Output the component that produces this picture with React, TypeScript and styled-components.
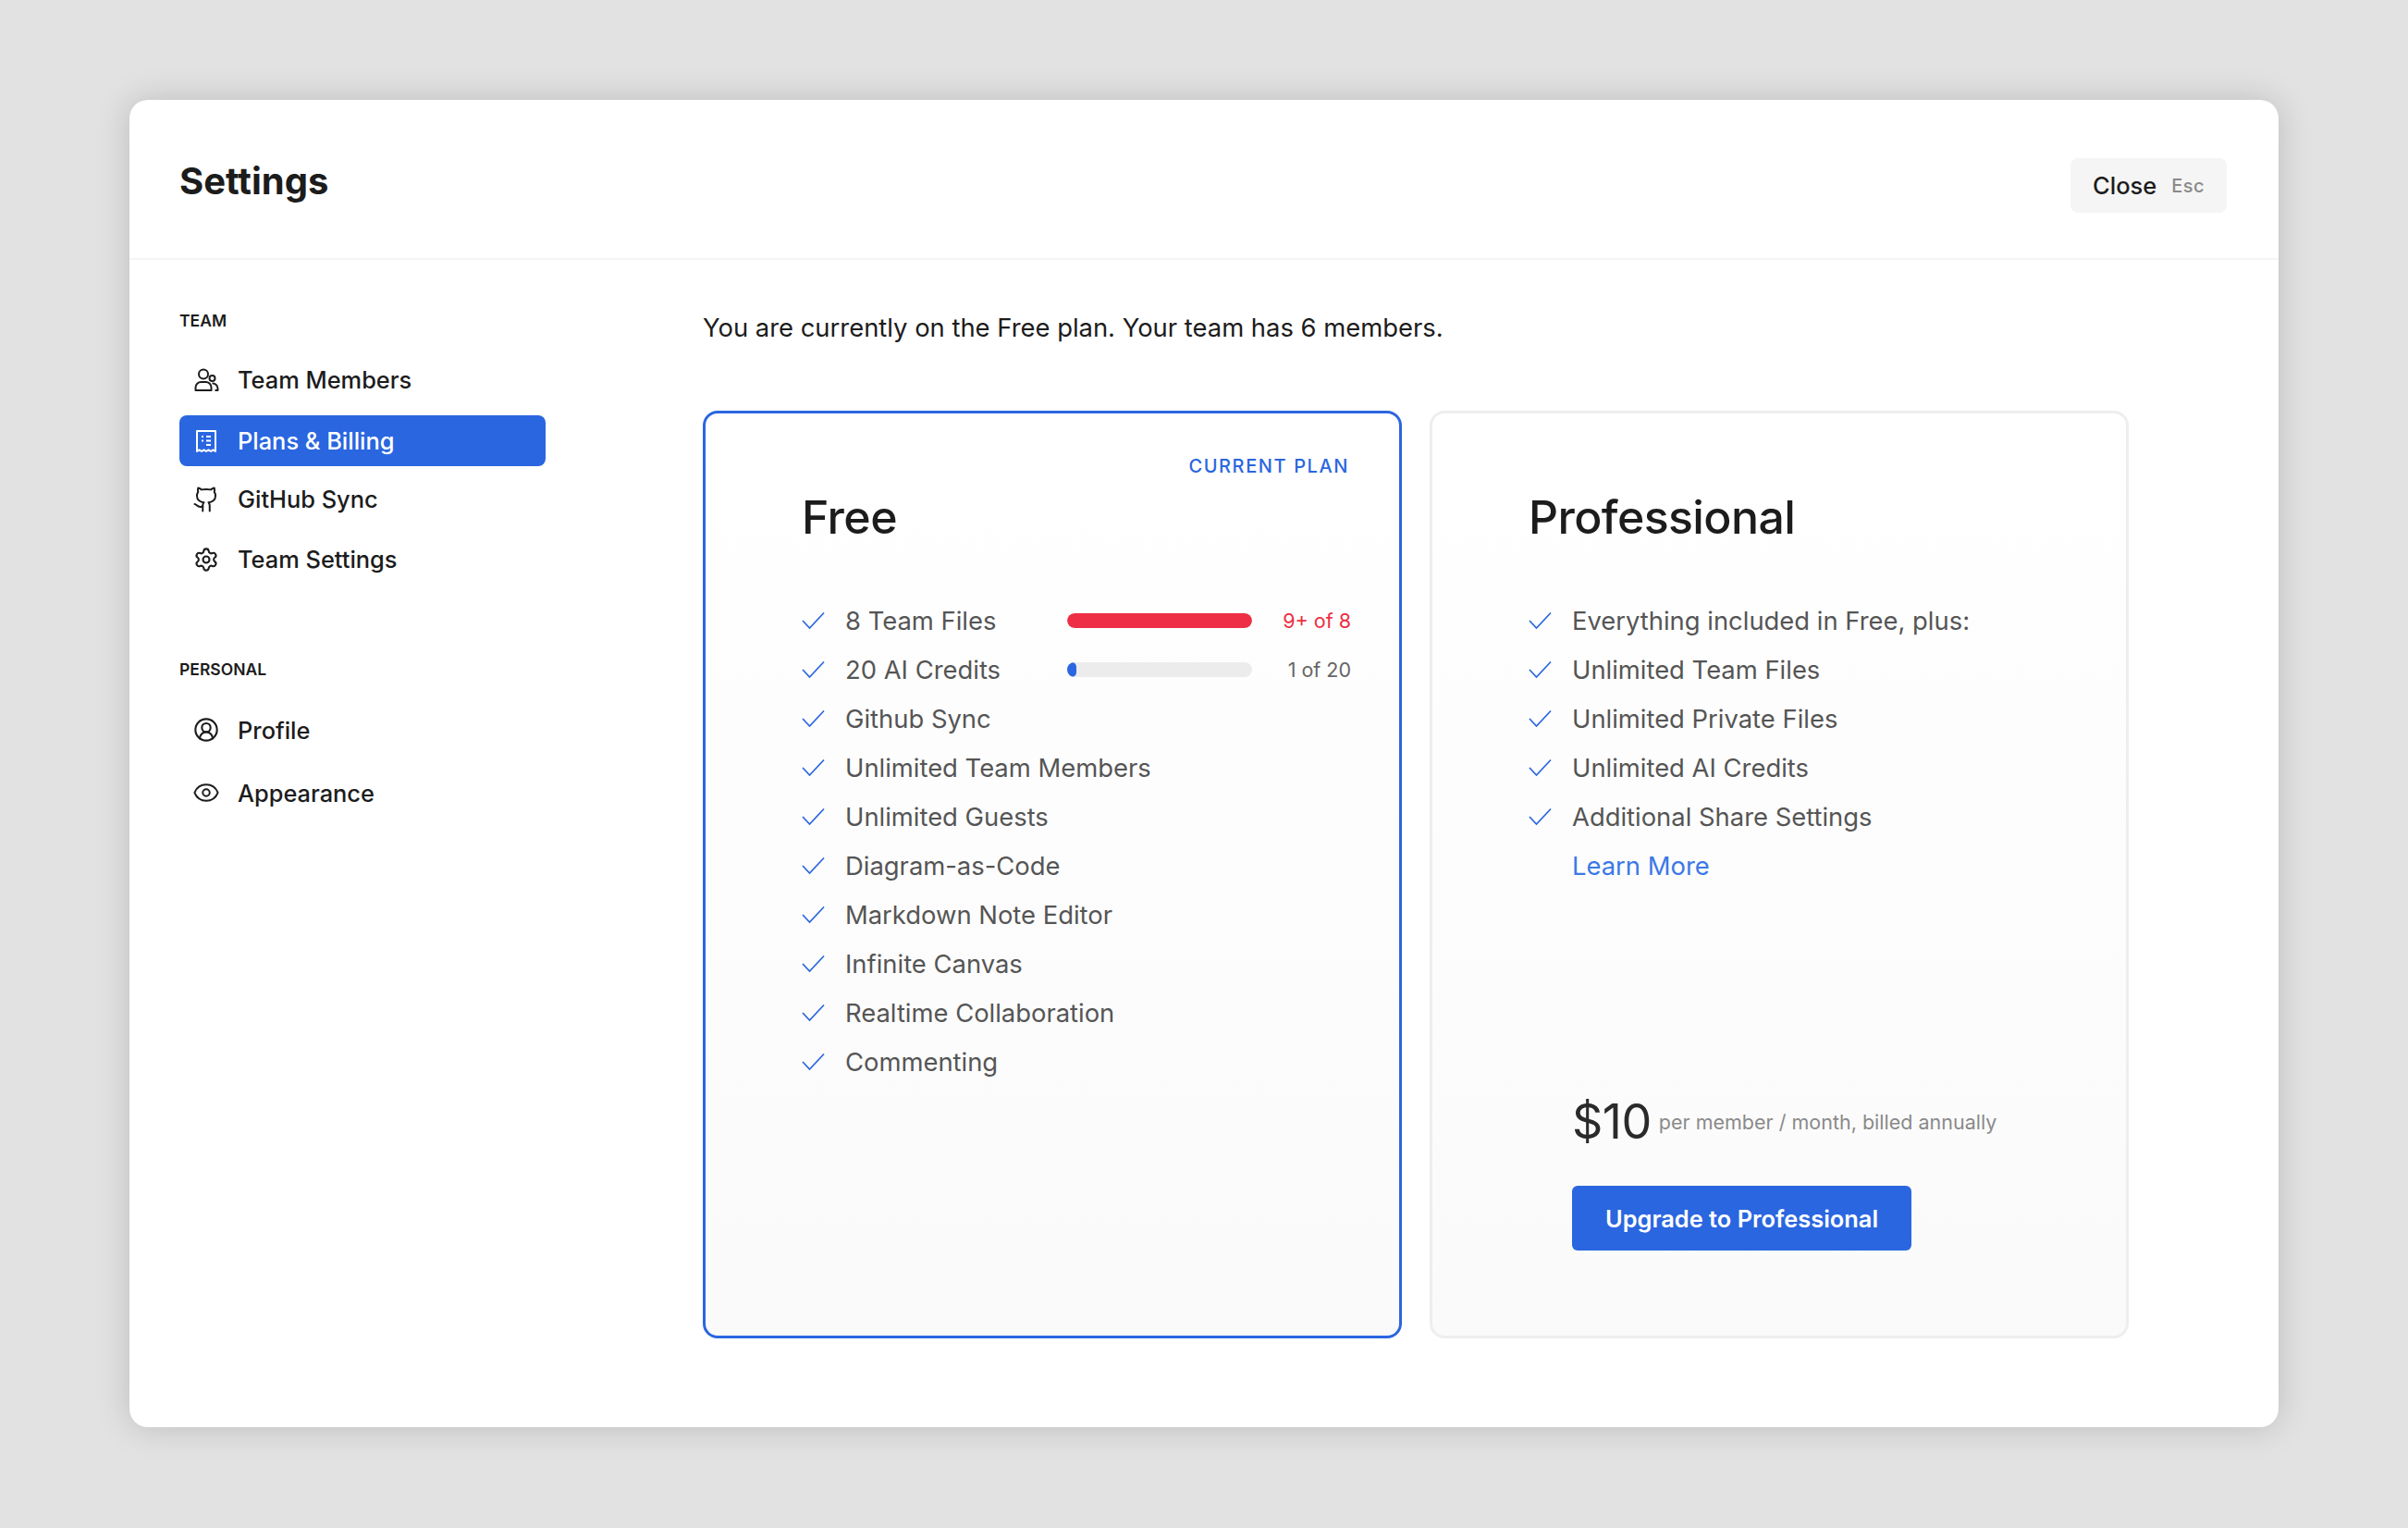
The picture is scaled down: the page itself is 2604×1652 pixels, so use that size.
import * as React from 'react'
import styled, { createGlobalStyle } from 'styled-components'
import { CircleUserRound, Eye, Github, Settings } from 'lucide-react'

const blue = '#2a66e0'

const GlobalStyle = createGlobalStyle`
    html, body {
        margin: 0;
        background: #e2e2e2;
    }
    * {
        box-sizing: border-box;
    }
`

const TeamIcon = () => (
    <svg width="28" height="28" viewBox="0 0 28 28" fill="none" stroke="currentColor" strokeWidth="2">
        <circle cx="11" cy="7.5" r="5" />
        <circle cx="20.5" cy="12" r="3" />
        <path d="M2.5 25v-3a6 6 0 0 1 6-6h5a6 6 0 0 1 6 6v3z" strokeLinejoin="round" />
        <path d="M20.5 17.5a5.5 5.5 0 0 1 6 5.5v2h-3" strokeLinejoin="round" />
    </svg>
)

const ReceiptIcon = () => (
    <svg width="28" height="28" viewBox="0 0 28 28" fill="none" stroke="currentColor" strokeWidth="2">
        <path d="M4 3h20v22l-2.5-1.6-2.5 1.6-2.5-1.6-2.5 1.6-2.5-1.6-2.5 1.6L6.5 23.4 4 25z" strokeLinejoin="round" />
        <path d="M9 9h2M14 9h5M9 13.5h2M14 13.5h5M14 18h5" />
    </svg>
)

const CheckIcon = () => (
    <CheckSvg viewBox="0 0 25 20" fill="none" stroke="#2a66e0" strokeWidth="1.7">
        <path d="M1 10l7.5 8L24 1.5" />
    </CheckSvg>
)

const teamLinks = [
    { label: 'Team Members', icon: <TeamIcon /> },
    { label: 'Plans & Billing', icon: <ReceiptIcon />, active: true },
    { label: 'GitHub Sync', icon: <Github size={30} strokeWidth={1.6} /> },
    { label: 'Team Settings', icon: <Settings size={28} strokeWidth={1.8} /> },
]

const personalLinks = [
    { label: 'Profile', icon: <CircleUserRound size={28} strokeWidth={1.8} /> },
    { label: 'Appearance', icon: <Eye size={30} strokeWidth={1.6} /> },
]

const freeFeatures = [
    'Github Sync',
    'Unlimited Team Members',
    'Unlimited Guests',
    'Diagram-as-Code',
    'Markdown Note Editor',
    'Infinite Canvas',
    'Realtime Collaboration',
    'Commenting',
]

const proFeatures = [
    'Everything included in Free, plus:',
    'Unlimited Team Files',
    'Unlimited Private Files',
    'Unlimited AI Credits',
    'Additional Share Settings',
]

export default function App() {
    return (
        <Page>
            <GlobalStyle />
            <Modal>
                <Header>
                    <Title>Settings</Title>
                    <CloseButton>
                        Close <Kbd>Esc</Kbd>
                    </CloseButton>
                </Header>
                <Body>
                    <Sidebar>
                        <NavLabel>Team</NavLabel>
                        {teamLinks.map(link => (
                            <NavItem key={link.label} $active={link.active}>
                                <NavIcon>{link.icon}</NavIcon>
                                {link.label}
                            </NavItem>
                        ))}
                        <NavLabel $second>Personal</NavLabel>
                        {personalLinks.map(link => (
                            <NavItem key={link.label} $tall>
                                <NavIcon>{link.icon}</NavIcon>
                                {link.label}
                            </NavItem>
                        ))}
                    </Sidebar>
                    <Main>
                        <Intro>You are currently on the Free plan. Your team has 6 members.</Intro>
                        <Cards>
                            <Card $current>
                                <CurrentTag>Current plan</CurrentTag>
                                <PlanName>Free</PlanName>
                                <Features>
                                    <Feature>
                                        <CheckIcon />
                                        <FeatureName>8 Team Files</FeatureName>
                                        <Bar><BarFill $color="#ee2e44" style={{ width: '100%' }} /></Bar>
                                        <Usage $over>9+ of 8</Usage>
                                    </Feature>
                                    <Feature>
                                        <CheckIcon />
                                        <FeatureName>20 AI Credits</FeatureName>
                                        <Bar><BarFill $color={blue} style={{ width: '5%' }} /></Bar>
                                        <Usage>1 of 20</Usage>
                                    </Feature>
                                    {freeFeatures.map(name => (
                                        <Feature key={name}>
                                            <CheckIcon />
                                            {name}
                                        </Feature>
                                    ))}
                                </Features>
                            </Card>
                            <Card>
                                <PlanName>Professional</PlanName>
                                <Features>
                                    {proFeatures.map(name => (
                                        <Feature key={name}>
                                            <CheckIcon />
                                            {name}
                                        </Feature>
                                    ))}
                                    <LearnMore>Learn More</LearnMore>
                                </Features>
                                <Pricing>
                                    <PriceRow>
                                        <Price>$10</Price>
                                        <PriceNote>per member / month, billed annually</PriceNote>
                                    </PriceRow>
                                    <UpgradeButton>Upgrade to Professional</UpgradeButton>
                                </Pricing>
                            </Card>
                        </Cards>
                    </Main>
                </Body>
            </Modal>
        </Page>
    )
}

const Page = styled.div`
    width: 2604px;
    height: 1652px;
    padding: 108px 140px 109px;
    font-family: Inter, "Liberation Sans", sans-serif;
    color: #1c1c1c;
`

const Modal = styled.div`
    height: 100%;
    display: flex;
    flex-direction: column;
    background: #fff;
    border-radius: 20px;
    box-shadow: 0 0 36px rgba(0, 0, 0, .17);
`

const Header = styled.header`
    height: 173px;
    flex: none;
    display: flex;
    align-items: flex-start;
    justify-content: space-between;
    padding: 63px 56px 0 54px;
    border-bottom: 2px solid #f5f5f5;
`

const Title = styled.h1`
    margin: 0;
    font-size: 40px;
    line-height: 50px;
    font-weight: 700;
`

const CloseButton = styled.div`
    width: 169px;
    height: 59px;
    display: flex;
    align-items: center;
    justify-content: space-between;
    padding: 0 24px;
    background: #f5f5f5;
    border-radius: 8px;
    font-size: 25.5px;
    font-weight: 500;
`

const Kbd = styled.span`
    font-size: 20px;
    font-weight: 500;
    letter-spacing: .5px;
    color: #8a8a8a;
`

const Body = styled.div`
    flex: 1;
    display: flex;
`

const Sidebar = styled.nav`
    width: 620px;
    flex: none;
    padding: 54px 170px 0 54px;
`

const NavLabel = styled.div<{ $second?: boolean }>`
    height: 24px;
    line-height: 24px;
    margin: ${p => p.$second ? '75px 0 19px' : '0 0 19px'};
    font-size: 17.5px;
    font-weight: 600;
    text-transform: uppercase;
    color: #1c1c1c;
`

const NavItem = styled.div<{ $active?: boolean; $tall?: boolean }>`
    height: ${p => p.$tall ? '68px' : '65px'};
    display: flex;
    align-items: center;
    position: relative;
    padding-left: 63px;
    font-size: 25.4px;
    font-weight: 500;
    color: ${p => p.$active ? '#fff' : '#1c1c1c'};

    ${p => p.$active && `
        height: 55px;
        margin: 6px 0 3px;
        background: ${blue};
        border-radius: 8px;
    `}
`

const NavIcon = styled.span`
    position: absolute;
    left: 15px;
    top: 50%;
    transform: translateY(-50%);
    width: 28px;
    height: 30px;
    display: flex;
    align-items: center;
    justify-content: center;

    svg {
        flex: none;
    }
`

const Main = styled.main`
    flex: 1;
    padding: 55px 162px 96px 0;
    display: flex;
    flex-direction: column;
`

const Intro = styled.p`
    margin: 0 0 72px;
    font-size: 27.4px;
    line-height: 36px;
    color: #1c1c1c;
`

const Cards = styled.div`
    flex: 1;
    display: grid;
    grid-template-columns: 1fr 1fr;
    gap: 30px;
`

const Card = styled.section<{ $current?: boolean }>`
    position: relative;
    display: flex;
    flex-direction: column;
    padding: 80px 52px 92px 104px;
    border: 3px solid ${p => p.$current ? blue : '#eeeeee'};
    border-radius: 16px;
    background: linear-gradient(#ffffff, #fafafa);
`

const CurrentTag = styled.div`
    position: absolute;
    top: 45px;
    right: 54px;
    font-size: 20px;
    line-height: 24px;
    font-weight: 500;
    letter-spacing: 1.6px;
    text-transform: uppercase;
    color: ${blue};
`

const PlanName = styled.h2`
    margin: 0 0 53px;
    font-size: 50px;
    line-height: 64px;
    font-weight: 500;
    letter-spacing: -.6px;
    color: #1c1c1c;
`

const Features = styled.ul`
    margin: 0;
    padding: 0;
    list-style: none;
`

const Feature = styled.li`
    height: 53px;
    display: flex;
    align-items: center;
    font-size: 27.4px;
    color: #555;
`

const CheckSvg = styled.svg`
    width: 25px;
    height: 20px;
    flex: none;
    margin-right: 22px;
`

const FeatureName = styled.span`
    width: 240px;
    flex: none;
`

const Bar = styled.div`
    width: 200px;
    height: 16px;
    flex: none;
    background: #ececec;
    border-radius: 8px;
    overflow: hidden;
`

const BarFill = styled.div<{ $color: string }>`
    height: 100%;
    background: ${p => p.$color};
    border-radius: 8px;
`

const Usage = styled.span<{ $over?: boolean }>`
    flex: 1;
    text-align: right;
    white-space: nowrap;
    font-size: 21.5px;
    color: ${p => p.$over ? '#ee2e44' : '#666'};
`

const LearnMore = styled.li`
    height: 53px;
    display: flex;
    align-items: center;
    padding-left: 47px;
    font-size: 27.4px;
    color: #3b78e7;
`

const Pricing = styled.div`
    margin-top: auto;
    padding-left: 47px;
`

const PriceRow = styled.div`
    display: flex;
    align-items: center;
    gap: 8px;
    margin-bottom: 37px;
`

const Price = styled.span`
    font-size: 52px;
    line-height: 64px;
    letter-spacing: -.5px;
    color: #2a2a2a;
`

const PriceNote = styled.span`
    font-size: 21.5px;
    color: #8a8a8a;
`

const UpgradeButton = styled.div`
    width: 367px;
    height: 70px;
    display: flex;
    align-items: center;
    justify-content: center;
    background: ${blue};
    border-radius: 6px;
    font-size: 25.4px;
    font-weight: 600;
    color: #fff;
`
